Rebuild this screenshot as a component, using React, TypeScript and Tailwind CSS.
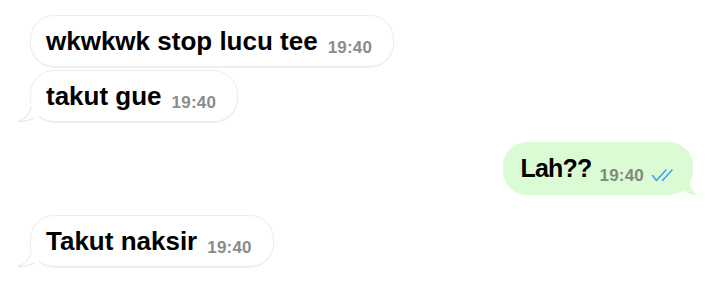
import React from "react";

const font = { fontFamily: '"Liberation Sans", Arial, sans-serif' };

function LeftTail() {
  return (
    <svg
      className="absolute -left-[14px] bottom-[-1px]"
      width="22"
      height="18"
      viewBox="0 0 22 18"
    >
      <path
        d="M22 0 L14 0 C14 8 10 14 1 17.5 C8 17.5 14 16 18 13 L22 13 Z"
        fill="#ffffff"
      />
      <path
        d="M14 2 C14 9 9 14 1 17.5 C8 17.5 14 16 18 13.5"
        fill="none"
        stroke="#e3e3e3"
        strokeWidth="1"
      />
    </svg>
  );
}

function RightTail() {
  return (
    <svg
      className="absolute -right-[9px] bottom-0"
      width="22"
      height="20"
      viewBox="0 0 22 20"
    >
      <path
        d="M0 0 L8 0 C8 10 12 16 18 20 C11 20 7 18 4 16 L0 16 Z"
        fill="#dbfbd4"
      />
    </svg>
  );
}

function Incoming({ text, tail }: { text: string; tail?: boolean }) {
  return (
    <div className="relative self-start ml-[30px] h-[52px] rounded-[24px] bg-white border border-[#ececec] shadow-[0_1px_1px_rgba(0,0,0,0.06)] pl-[15px] pr-[21px] flex items-center">
      {tail && <LeftTail />}
      <span className="text-[26px] font-bold text-black leading-none">
        {text}
      </span>
      <span className="ml-[10px] mt-[12px] text-[17px] font-bold tracking-[0.2px] text-[#8c8c8c] leading-none">
        19:40
      </span>
    </div>
  );
}

function DoubleCheck() {
  return (
    <svg width="26" height="14" viewBox="0 0 26 14" className="ml-[7px] mt-[12px]">
      <path
        d="M1.5 7.5 L5.5 12.5 L15 2"
        fill="none"
        stroke="#4a9cf0"
        strokeWidth="1.6"
        strokeLinecap="round"
        strokeLinejoin="round"
      />
      <path
        d="M11.5 12.5 L21 2"
        fill="none"
        stroke="#4a9cf0"
        strokeWidth="1.6"
        strokeLinecap="round"
      />
    </svg>
  );
}

export default function App() {
  return (
    <div
      className="w-[720px] h-[293px] bg-white flex flex-col pt-[15px]"
      style={font}
    >
      <Incoming text="wkwkwk stop lucu tee" />
      <div className="h-[3px]" />
      <Incoming text="takut gue" tail />
      <div className="h-[20px]" />
      <div className="relative self-end mr-[27px] h-[53px] rounded-[24px] bg-[#dbfbd4] pl-[18px] pr-[16px] flex items-center">
        <RightTail />
        <span className="text-[25px] font-bold tracking-[-0.8px] text-black leading-none">
          Lah??
        </span>
        <span className="ml-[8px] mt-[14px] text-[17px] font-bold tracking-[0.2px] text-[#808a7f] leading-none">
          19:40
        </span>
        <DoubleCheck />
      </div>
      <div className="h-[20px]" />
      <Incoming text="Takut naksir" tail />
    </div>
  );
}
